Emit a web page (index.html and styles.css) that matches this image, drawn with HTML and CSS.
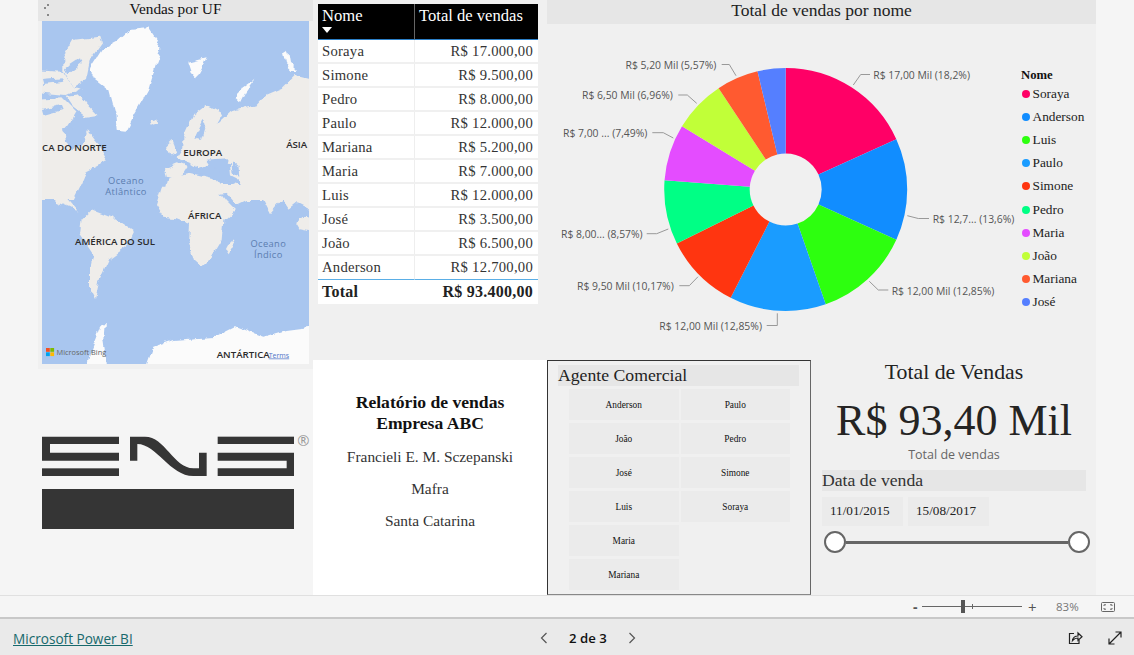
FILE: index.html
```html
<!DOCTYPE html>
<html lang="pt">
<head>
<meta charset="utf-8">
<title>Relatório de vendas</title>
<link rel="stylesheet" href="styles.css">
</head>
<body>
<main class="canvas">
  <section class="leftcol">
    <div class="map-panel">
      <div class="map-title"><span class="focus-dots"><i></i><i></i><i></i></span>Vendas por UF</div>
      <svg class="map" viewBox="42 21 267 343" width="267" height="343">
        <defs>
          <filter id="soft" x="-5%" y="-5%" width="110%" height="110%">
            <feTurbulence type="fractalNoise" baseFrequency=".09" numOctaves="3" seed="4" result="n"/>
            <feDisplacementMap in="SourceGraphic" in2="n" scale="7" xChannelSelector="R" yChannelSelector="G"/>
            <feGaussianBlur stdDeviation=".45"/>
          </filter>
        </defs>
        <rect x="42" y="21" width="267" height="343" fill="#a9c6ef"/>
        <g filter="url(#soft)">
          <g transform="translate(30 0) scale(.3333)">
            <path class="ice" d="M180 205 L215 150 L262 125 L300 90 L355 85 L395 145 L375 200 L355 270 L315 340 L287 395 L260 392 L256 340 L238 270 L192 235Z"/>
            <path class="land" d="M100 170 L130 120 L210 110 L216 130 L180 180 L168 240 L130 262 L100 210Z"/>
            <path class="sea" d="M105 205 L150 175 L155 190 L112 222Z"/>
            <path class="land" d="M10 210 L100 215 L130 262 L155 265 L110 285 L10 275Z"/>
            <path class="sea" d="M36 240 L95 235 L100 248 L40 255Z"/>
            <path class="land" d="M110 290 L150 285 L180 320 L205 345 L170 350 L130 320Z"/>
            <path class="land" d="M10 300 L100 295 L140 335 L120 370 L100 400 L135 390 L172 392 L215 450 L232 480 L172 510 L150 560 L130 600 L10 600Z"/>
            <path class="sea" d="M102 385 L150 378 L170 395 L165 425 L130 450 L108 425Z"/>
            <path class="sea" d="M36 330 L90 318 L95 330 L40 345Z"/>
            <path class="land" d="M358 365 L385 358 L388 372 L362 380Z"/>
            <path class="ice" d="M475 185 L530 172 L520 195 L500 232 L485 215Z"/>
            <path class="ice" d="M620 300 L640 260 L676 235 L650 270 L630 310Z"/>
            <path class="ice" d="M760 165 L775 155 L780 185 L804 210 L785 210 L765 190Z"/>
            <path class="land" d="M460 410 L490 345 L530 315 L578 340 L560 372 L600 335 L680 312 L700 290 L760 265 L800 225 L860 240 L860 600 L650 600 L605 545 L600 490 L560 485 L505 505 L480 490 L440 475 L460 445Z"/>
            <path class="sea" d="M495 415 L520 360 L530 372 L515 420Z"/>
            <path class="land" d="M405 440 L425 420 L440 460 L420 470Z"/>
            <path class="land" d="M405 505 L440 490 L470 500 L445 540 L410 530Z"/>
            <path class="sea" d="M470 520 L540 505 L570 510 L620 535 L640 560 L585 545 L520 525Z"/>
            <path class="sea" d="M530 482 L590 478 L585 498 L540 498Z"/>
            <path class="sea" d="M604 482 L625 500 L628 530 L608 520Z"/>
            <path class="land" d="M415 535 L470 520 L560 540 L590 575 L400 600Z"/>
          </g>
          <g transform="translate(30 190) scale(.3333)">
            <path class="land" d="M10 -20 L100 -20 L95 10 L145 68 L120 52 L80 35 L50 5Z"/>
            <path class="land" d="M378 45 L395 -10 L555 -10 L585 30 L615 60 L580 92 L575 150 L545 200 L515 228 L495 210 L478 150 L480 100 L440 85 L400 80Z"/>
            <path class="land" d="M570 -15 L620 45 L680 15 L700 30 L720 70 L755 28 L780 65 L810 115 L860 125 L860 -15Z"/>
            <path class="sea" d="M768 65 L800 40 L860 70 L860 85 L815 80 L795 100Z"/>
            <path class="land" d="M605 148 L612 165 L596 193 L588 180Z"/>
            <path class="land" d="M155 90 L185 60 L250 85 L312 125 L290 170 L235 210 L210 265 L195 330 L180 300 L180 240 L190 190 L150 130Z"/>
            <path class="ice" d="M345 540 L370 470 L430 450 L560 440 L620 410 L700 440 L770 420 L860 408 L860 540Z"/>
            <path class="ice" d="M170 540 L180 490 L210 410 L225 395 L220 450 L232 540Z"/>
          </g>
        </g>
        <text class="region" x="42" y="151">CA DO NORTE</text>
        <text class="region" x="202.700" y="156" text-anchor="middle">EUROPA</text>
        <text class="region" x="296.700" y="148" text-anchor="middle">ÁSIA</text>
        <text class="ocean" text-anchor="middle"><tspan x="126" y="184">Oceano</tspan><tspan x="126" y="194.500">Atlântico</tspan></text>
        <text class="region" x="204.700" y="219" text-anchor="middle">ÁFRICA</text>
        <text class="region" x="115" y="245" text-anchor="middle">AMÉRICA DO SUL</text>
        <text class="ocean" text-anchor="middle"><tspan x="268.300" y="247">Oceano</tspan><tspan x="268.300" y="257.500">Índico</tspan></text>
        <text class="region" x="216.700" y="358">ANTÁRTICA</text>
        <text class="terms" x="268.700" y="357.500">Terms</text>
        <rect x="46" y="348" width="3.800" height="3.800" fill="#f25022"/>
        <rect x="50.300" y="348" width="3.800" height="3.800" fill="#7fba00"/>
        <rect x="46" y="352.300" width="3.800" height="3.800" fill="#00a4ef"/>
        <rect x="50.300" y="352.300" width="3.800" height="3.800" fill="#ffb900"/>
        <text class="bing" x="56.500" y="355">Microsoft Bing</text>
      </svg>
    </div>
    <div class="logo-panel">
      <svg class="logo" viewBox="36 15 813 315" width="271" height="105">
        <defs><filter id="logoblur" x="-2%" y="-5%" width="104%" height="110%"><feGaussianBlur stdDeviation="1.200"/></filter></defs>
        <g filter="url(#logoblur)">
          <path class="logo-ink" d="M36 50 H267 V72 H60 V98 H267 V122 H36Z"/>
          <rect class="logo-ink" x="36" y="145" width="231" height="23"/>
          <path class="logo-ink" d="M300 122 V50 H345 C405 50 430 143 490 145 H507 V98 H530 V168 H490 C420 168 380 72 322 72 V122Z"/>
          <rect class="logo-ink" x="563" y="50" width="229" height="22"/>
          <path class="logo-ink" d="M563 98 H792 V168 H563 V145 H770 V122 H563Z"/>
          <rect class="logo-ink" x="36" y="207" width="756" height="120"/>
        </g>
        <text class="logo-mark" x="820" y="78" text-anchor="middle">®</text>
      </svg>
    </div>
  </section>

  <section class="rightcol">
    <div class="toprow">
      <div class="table-panel">
        <table class="sales">
          <thead>
            <tr><th class="col-name">Nome<span class="sort"></span></th><th class="col-total">Total de vendas</th></tr>
          </thead>
          <tbody>
            <tr><td>Soraya</td><td class="num">R$ 17.000,00</td></tr>
            <tr><td>Simone</td><td class="num">R$ 9.500,00</td></tr>
            <tr><td>Pedro</td><td class="num">R$ 8.000,00</td></tr>
            <tr><td>Paulo</td><td class="num">R$ 12.000,00</td></tr>
            <tr><td>Mariana</td><td class="num">R$ 5.200,00</td></tr>
            <tr><td>Maria</td><td class="num">R$ 7.000,00</td></tr>
            <tr><td>Luis</td><td class="num">R$ 12.000,00</td></tr>
            <tr><td>José</td><td class="num">R$ 3.500,00</td></tr>
            <tr><td>João</td><td class="num">R$ 6.500,00</td></tr>
            <tr><td>Anderson</td><td class="num">R$ 12.700,00</td></tr>
          </tbody>
          <tfoot>
            <tr><td>Total</td><td class="num">R$ 93.400,00</td></tr>
          </tfoot>
        </table>
      </div>
      <div class="chart-panel">
        <div class="chart-title">Total de vendas por nome</div>
        <div class="chart-body">
          <svg class="pie" viewBox="547 24 473 336" width="473" height="336">
            <g transform="rotate(-90 785.700 189.500)" fill="none" stroke-width="85.500">
              <circle cx="785.700" cy="189.500" r="78.750" pathLength="93400" stroke="#ff0066" stroke-dasharray="17000 76400" stroke-dashoffset="0"/>
              <circle cx="785.700" cy="189.500" r="78.750" pathLength="93400" stroke="#118dff" stroke-dasharray="12700 80700" stroke-dashoffset="-17000"/>
              <circle cx="785.700" cy="189.500" r="78.750" pathLength="93400" stroke="#2dff0f" stroke-dasharray="12000 81400" stroke-dashoffset="-29700"/>
              <circle cx="785.700" cy="189.500" r="78.750" pathLength="93400" stroke="#1a9cff" stroke-dasharray="12000 81400" stroke-dashoffset="-41700"/>
              <circle cx="785.700" cy="189.500" r="78.750" pathLength="93400" stroke="#ff3510" stroke-dasharray="9500 83900" stroke-dashoffset="-53700"/>
              <circle cx="785.700" cy="189.500" r="78.750" pathLength="93400" stroke="#00ff85" stroke-dasharray="8000 85400" stroke-dashoffset="-63200"/>
              <circle cx="785.700" cy="189.500" r="78.750" pathLength="93400" stroke="#e44cff" stroke-dasharray="7000 86400" stroke-dashoffset="-71200"/>
              <circle cx="785.700" cy="189.500" r="78.750" pathLength="93400" stroke="#c1ff38" stroke-dasharray="6500 86900" stroke-dashoffset="-78200"/>
              <circle cx="785.700" cy="189.500" r="78.750" pathLength="93400" stroke="#ff5a30" stroke-dasharray="5200 88200" stroke-dashoffset="-84700"/>
              <circle cx="785.700" cy="189.500" r="78.750" pathLength="93400" stroke="#557fff" stroke-dasharray="3500 89900" stroke-dashoffset="-89900"/>
            </g>
            <g class="leaders">
              <polyline points="721.700,64.500 729.300,64.500 736,75.700"/>
              <polyline points="678.300,95 687.300,95 696.700,103.300"/>
              <polyline points="652.300,132.700 663.300,132.700 673.300,138"/>
              <polyline points="646.700,233.700 656.700,233.700 668.300,229"/>
              <polyline points="679.300,285.700 689.300,285.700 698,276.700"/>
              <polyline points="766.700,325.500 777.300,325.500 777.300,313.300"/>
              <polyline points="853.300,85 860.700,74.500 870,74.500"/>
              <polyline points="907.300,215.700 918.300,218.500 929,218.500"/>
              <polyline points="869.300,281.300 878.300,290 888.300,290"/>
            </g>
            <g class="labels">
              <text x="625.500" y="69">R$ 5,20 Mil (5,57%)</text>
              <text x="582" y="99">R$ 6,50 Mil (6,96%)</text>
              <text x="563" y="137">R$ 7,00 ... (7,49%)</text>
              <text x="561" y="238">R$ 8,00... (8,57%)</text>
              <text x="577" y="290">R$ 9,50 Mil (10,17%)</text>
              <text x="659.300" y="330">R$ 12,00 Mil (12,85%)</text>
              <text x="873.300" y="79">R$ 17,00 Mil (18,2%)</text>
              <text x="932.700" y="223">R$ 12,7... (13,6%)</text>
              <text x="891.700" y="295">R$ 12,00 Mil (12,85%)</text>
            </g>
          </svg>
          <div class="legend">
            <div class="legend-title">Nome</div>
            <div class="legend-item"><i class="dot c1"></i>Soraya</div>
            <div class="legend-item"><i class="dot c2"></i>Anderson</div>
            <div class="legend-item"><i class="dot c3"></i>Luis</div>
            <div class="legend-item"><i class="dot c4"></i>Paulo</div>
            <div class="legend-item"><i class="dot c5"></i>Simone</div>
            <div class="legend-item"><i class="dot c6"></i>Pedro</div>
            <div class="legend-item"><i class="dot c7"></i>Maria</div>
            <div class="legend-item"><i class="dot c8"></i>João</div>
            <div class="legend-item"><i class="dot c9"></i>Mariana</div>
            <div class="legend-item"><i class="dot c10"></i>José</div>
          </div>
        </div>
      </div>
    </div>
    <div class="bottomrow">
      <div class="text-panel">
        <p class="report-title">Relatório de vendas<br>Empresa ABC</p>
        <p class="report-line">Francieli E. M. Sczepanski</p>
        <p class="report-line">Mafra</p>
        <p class="report-line">Santa Catarina</p>
      </div>
      <div class="slicer">
        <div class="slicer-title">Agente Comercial</div>
        <div class="slicer-grid">
          <div class="chip">Anderson</div>
          <div class="chip">João</div>
          <div class="chip">José</div>
          <div class="chip">Luis</div>
          <div class="chip">Maria</div>
          <div class="chip">Mariana</div>
          <div class="chip">Paulo</div>
          <div class="chip">Pedro</div>
          <div class="chip">Simone</div>
          <div class="chip">Soraya</div>
        </div>
      </div>
      <div class="total-panel">
        <div class="total-title">Total de Vendas</div>
        <div class="kpi">R$ 93,40 Mil</div>
        <div class="kpi-label">Total de vendas</div>
        <div class="date-title">Data de venda</div>
        <div class="date-row">
          <div class="date-box">11/01/2015</div>
          <div class="date-box">15/08/2017</div>
        </div>
        <div class="range"><span class="knob"></span><span class="track"></span><span class="knob"></span></div>
      </div>
    </div>
  </section>
</main>

<div class="zoombar">
  <span class="zoom-sign">-</span>
  <span class="zoom-slider"><i class="zoom-thumb"></i><i class="zoom-tick"></i></span>
  <span class="zoom-sign plus">+</span>
  <span class="zoom-pct">83%</span>
  <svg class="fit" viewBox="0 0 14 10" width="14" height="10"><rect x=".5" y=".5" width="13" height="9" rx="1"/><path d="M3 4V2.800H5M9 2.800H11V4M11 6V7.200H9M5 7.200H3V6"/></svg>
</div>
<footer class="navbar">
  <a class="brand" href="#">Microsoft Power BI</a>
  <div class="pager">
    <svg class="chev" viewBox="0 0 8 12" width="8" height="12"><path d="M6.500 1 L1.500 6 L6.500 11"/></svg>
    <span class="page-no">2 de 3</span>
    <svg class="chev" viewBox="0 0 8 12" width="8" height="12"><path d="M1.500 1 L6.500 6 L1.500 11"/></svg>
  </div>
  <div class="nav-icons">
    <svg class="nav-ico" viewBox="0 0 15 14" width="15" height="14"><path d="M6 2.500H1.500V12.500H11V9"/><path d="M4.500 9.500C5 6.500 7 5 10 5V2L14 5.800L10 9.500V7C8 7 6 7.800 4.500 9.500Z"/></svg>
    <svg class="nav-ico" viewBox="0 0 14 14" width="14" height="14"><path d="M1 13L13 1M7.500 1H13V6.500M1 7.500V13H6.500"/></svg>
  </div>
</footer>
</body>
</html>
```

FILE: styles.css
```css
* { box-sizing: border-box; }
html, body { margin: 0; padding: 0; }
body {
  width: 1134px;
  height: 655px;
  overflow: hidden;
  background: #f5f5f5;
  font-family: "Liberation Serif", serif;
  color: #222;
}
.canvas { display: flex; height: 595px; padding-left: 38px; }
.leftcol { width: 275px; display: flex; flex-direction: column; }
.rightcol { width: 783px; display: flex; flex-direction: column; }

/* Map */
.map-panel { height: 369px; background: #f0f0f0; }
.map-title {
  position: relative;
  height: 21px;
  background: #e6e6e6;
  text-align: center;
  font-size: 15.300px;
  line-height: 18px;
  color: #111;
}
.focus-dots { position: absolute; left: 5px; top: 3px; width: 10px; height: 14px; }
.focus-dots i { position: absolute; width: 2px; height: 2px; background: #888; }
.focus-dots i:nth-child(1) { left: 4px; top: 1px; }
.focus-dots i:nth-child(2) { left: 1px; top: 4px; }
.focus-dots i:nth-child(3) { left: 4px; top: 11px; }
.map { display: block; margin-left: 4px; }
.land { fill: #efedea; }
.ice { fill: #fbfbfb; }
.sea { fill: #a9c6ef; }
.region { font: 600 9.700px "Open Sans", sans-serif; fill: #2a2a2a; }
.ocean { font: 400 9.300px "Open Sans", sans-serif; fill: #5b7db0; letter-spacing: .4px; }
.terms { font: 400 7px "Open Sans", sans-serif; fill: #4f74c8; text-decoration: underline; }
.bing { font: 400 7.400px "Open Sans", sans-serif; fill: #666; }

/* Logo */
.logo-panel { flex: 1; background: #f5f5f5; padding: 56px 0 0 4px; }
.logo { display: block; }
.logo-ink { fill: #363435; }
.logo-mark { font: 400 44px "Open Sans", sans-serif; fill: #999; }

/* Top row */
.toprow { display: flex; height: 360px; }
.table-panel { width: 234px; background: #f0f0f0; padding: 4px 9px 0 5px; }
.sales { width: 220px; border-collapse: separate; border-spacing: 0; table-layout: fixed; background: #fff; }
.sales th {
  background: #000;
  color: #fff;
  font-weight: 400;
  font-size: 16.600px;
  height: 36px;
  vertical-align: top;
  text-align: left;
  padding: 3px 4px 0;
  line-height: 17px;
  border-bottom: 1px solid #2b7fc7;
}
.col-name { width: 97px; border-right: 1px solid #666; }
.sort {
  display: block;
  width: 0;
  margin-top: 3px;
  border-left: 5.500px solid transparent;
  border-right: 5.500px solid transparent;
  border-top: 6px solid #fff;
}
.sales td {
  height: 24px;
  padding: 0 4px;
  font-size: 14.670px;
  letter-spacing: .25px;
  color: #333;
  border-bottom: 2px solid #f0f0f0;
}
.sales tbody td:first-child { border-right: 1px solid #eee; }
.sales .num { text-align: right; padding-right: 5px; }
.sales tbody tr:last-child td { border-bottom: 1px solid #5aaee6; }
.sales tfoot td {
  height: 24px;
  font-weight: 700;
  font-size: 16px;
  color: #222;
  border-bottom: 0;
}

/* Chart */
.chart-panel { width: 549px; background: #f0f0f0; display: flex; flex-direction: column; }
.chart-title {
  height: 24px;
  background: #e6e6e6;
  text-align: center;
  font-size: 17.500px;
  line-height: 21px;
  color: #222;
}
.chart-body { display: flex; flex: 1; }
.pie { display: block; flex: none; }
.leaders polyline { fill: none; stroke: #999; stroke-width: 1; }
.labels text { font: 400 10.400px "Open Sans", sans-serif; fill: #555; }
.legend { padding: 43px 0 0 1px; font-size: 13.330px; }
.legend-title { font-weight: 700; font-size: 12.700px; height: 15.500px; line-height: 16px; color: #111; }
.legend-item { display: flex; align-items: center; height: 23.100px; color: #222; white-space: nowrap; }
.dot { width: 8px; height: 8px; border-radius: 50%; margin: 0 2.500px 0 1px; flex: none; }
.c1 { background: #ff0066; }
.c2 { background: #118dff; }
.c3 { background: #2dff0f; }
.c4 { background: #1a9cff; }
.c5 { background: #ff3510; }
.c6 { background: #00ff85; }
.c7 { background: #e44cff; }
.c8 { background: #c1ff38; }
.c9 { background: #ff5a30; }
.c10 { background: #557fff; }

/* Bottom row */
.bottomrow { display: flex; height: 235px; }
.text-panel { width: 234px; background: #fff; text-align: center; padding-top: 32px; }
.report-title { margin: 0 0 14px; font-weight: 700; font-size: 17.600px; line-height: 21px; color: #111; }
.report-line { margin: 0 0 14px; font-size: 15.400px; line-height: 18px; color: #333; }

.slicer {
  width: 264px;
  background: #f0f0f0;
  border: 1px solid #333;
  border-right-color: #666;
  border-bottom-color: #888;
  padding: 4px 11px 0 10px;
}
.slicer-title {
  height: 21px;
  background: #e6e6e6;
  font-size: 17.700px;
  line-height: 20px;
  color: #222;
}
.slicer-grid {
  display: grid;
  grid-template-rows: repeat(6, 31px);
  grid-auto-flow: column;
  grid-auto-columns: 109.500px;
  gap: 3px 2px;
  margin: 3px 0 0 11px;
}
.chip {
  background: #ebebeb;
  display: flex;
  align-items: center;
  justify-content: center;
  font-size: 9.330px;
  color: #111;
}

.total-panel { width: 285px; background: #f0f0f0; padding: 0 10px 0 11px; }
.total-title { text-align: center; font-size: 21.800px; line-height: 25px; height: 25px; color: #222; }
.kpi { text-align: center; font-size: 44px; line-height: 55px; height: 55px; margin-top: 8px; color: #252423; white-space: nowrap; }
.kpi-label { text-align: center; font: 400 12.500px/16px "Open Sans", sans-serif; height: 16px; color: #666; margin-top: -1px; }
.date-title { height: 21px; margin-top: 7px; background: #e6e6e6; font-size: 17.700px; line-height: 20px; color: #333; }
.date-row { display: flex; gap: 5px; margin-top: 6px; }
.date-box { width: 81px; height: 29px; padding-left: 8px; background: #ebebeb; font-size: 13.200px; line-height: 28px; color: #222; white-space: nowrap; }
.range { display: flex; align-items: center; height: 22px; margin-top: 5px; width: 266px; margin-left: 2px; }
.knob { width: 22px; height: 22px; border-radius: 50%; border: 2px solid #666; background: #fff; flex: none; }
.track { flex: 1; height: 3px; background: #666; }

/* Zoom bar */
.zoombar {
  height: 24px;
  background: #f5f5f5;
  border-top: 1px solid #e0e0e0;
  border-bottom: 2px solid #c8c8c8;
  display: flex;
  align-items: center;
  padding-left: 913px;
  font-family: "Open Sans", sans-serif;
  color: #666;
}
.zoom-sign { width: 9px; font-size: 14px; font-weight: 700; color: #555; line-height: 18px; }
.zoom-sign.plus { width: 14px; margin-left: 6px; font-size: 15px; font-weight: 400; }
.zoom-slider { position: relative; width: 100px; height: 1px; background: #666; }
.zoom-thumb { position: absolute; left: 39px; top: -6px; width: 4px; height: 13px; background: #555; }
.zoom-tick { position: absolute; left: 50px; top: -2px; width: 1px; height: 5px; background: #666; }
.zoom-pct { margin-left: 14px; font-size: 11.500px; color: #777; }
.fit { margin-left: 22px; fill: none; stroke: #666; stroke-width: 1; }

/* Nav bar */
.navbar {
  position: relative;
  height: 36px;
  background: #eaeaea;
  display: flex;
  align-items: center;
  padding-left: 13px;
}
.brand { font: 400 13.600px "Open Sans", sans-serif; color: #17696c; text-decoration: underline; width: 527px; white-space: nowrap; padding-top: 3px; }
.pager { display: flex; align-items: center; padding-top: 1px; font: 600 13.200px "Open Sans", sans-serif; color: #111; }
.page-no { margin: 0 21px; }
.chev { fill: none; stroke: #555; stroke-width: 1.200; }
.nav-icons { margin-left: 432px; display: flex; gap: 25px; padding-top: 1px; }
.nav-ico { fill: none; stroke: #222; stroke-width: 1.200; display: block; }
```
